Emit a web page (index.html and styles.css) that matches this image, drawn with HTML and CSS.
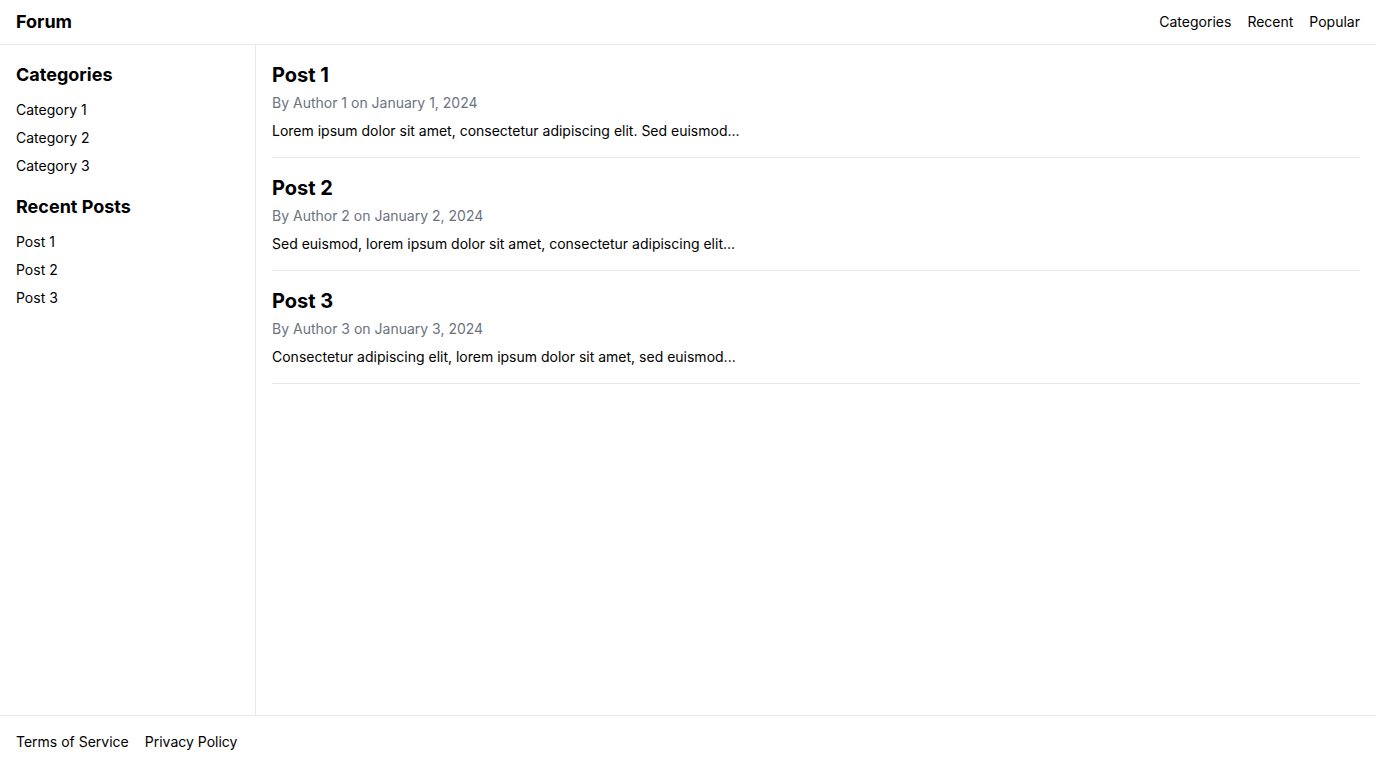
FILE: index.html
```
<!DOCTYPE html>
<html lang="en">
<head>
<meta charset="utf-8">
<title>Forum</title>
<link rel="stylesheet" href="styles.css">
</head>
<body>
<div class="page">
  <header class="topbar">
    <div class="brand">Forum</div>
    <nav class="topnav">
      <a href="#">Categories</a>
      <a href="#">Recent</a>
      <a href="#">Popular</a>
    </nav>
  </header>
  <div class="content">
    <aside class="sidebar">
      <h2 class="side-title">Categories</h2>
      <ul class="side-list">
        <li><a href="#">Category 1</a></li>
        <li><a href="#">Category 2</a></li>
        <li><a href="#">Category 3</a></li>
      </ul>
      <h2 class="side-title">Recent Posts</h2>
      <ul class="side-list">
        <li><a href="#">Post 1</a></li>
        <li><a href="#">Post 2</a></li>
        <li><a href="#">Post 3</a></li>
      </ul>
    </aside>
    <main class="posts">
      <article class="post">
        <h3 class="post-title">Post 1</h3>
        <p class="post-meta">By Author 1 on January 1, 2024</p>
        <p class="post-body">Lorem ipsum dolor sit amet, consectetur adipiscing elit. Sed euismod...</p>
      </article>
      <article class="post">
        <h3 class="post-title">Post 2</h3>
        <p class="post-meta">By Author 2 on January 2, 2024</p>
        <p class="post-body">Sed euismod, lorem ipsum dolor sit amet, consectetur adipiscing elit...</p>
      </article>
      <article class="post">
        <h3 class="post-title">Post 3</h3>
        <p class="post-meta">By Author 3 on January 3, 2024</p>
        <p class="post-body">Consectetur adipiscing elit, lorem ipsum dolor sit amet, sed euismod...</p>
      </article>
    </main>
  </div>
  <footer class="footer">
    <a href="#">Terms of Service</a>
    <a href="#">Privacy Policy</a>
  </footer>
</div>
</body>
</html>
```
FILE: styles.css
```
* { box-sizing: border-box; }
html, body { margin: 0; padding: 0; }
body {
  font-family: Inter, "Noto Sans", sans-serif;
  color: #000;
  background: #fff;
}
a { color: inherit; text-decoration: none; }
h2, h3, p, ul { margin: 0; padding: 0; }
ul { list-style: none; }

.page {
  display: flex;
  flex-direction: column;
  min-height: 100vh;
}

.topbar {
  display: flex;
  justify-content: space-between;
  align-items: center;
  padding: 8px 16px;
  border-bottom: 1px solid #e5e7eb;
}
.brand {
  font-size: 18px;
  line-height: 28px;
  font-weight: 700;
}
.topnav {
  display: flex;
  gap: 16px;
  font-size: 14px;
  line-height: 20px;
}

.content {
  flex: 1;
  display: flex;
}

.sidebar {
  width: 256px;
  flex: none;
  padding: 16px;
  border-right: 1px solid #e5e7eb;
}
.side-title {
  font-size: 18px;
  line-height: 28px;
  font-weight: 700;
  margin-bottom: 11px;
}
.side-list {
  display: flex;
  flex-direction: column;
  gap: 8px;
  font-size: 14px;
  line-height: 20px;
  margin-bottom: 17px;
}

.posts {
  flex: 1;
  padding: 16px;
}
.post {
  padding-bottom: 16px;
  margin-bottom: 16px;
  border-bottom: 1px solid #e5e7eb;
}
.post-title {
  font-size: 20px;
  line-height: 28px;
  font-weight: 700;
  margin-bottom: 4px;
}
.post-meta {
  font-size: 14px;
  line-height: 20px;
  color: #6b7280;
  margin-bottom: 8px;
}
.post-body {
  font-size: 14px;
  line-height: 20px;
}

.footer {
  display: flex;
  gap: 16px;
  padding: 16px;
  font-size: 14px;
  line-height: 20px;
  border-top: 1px solid #e5e7eb;
}
```
